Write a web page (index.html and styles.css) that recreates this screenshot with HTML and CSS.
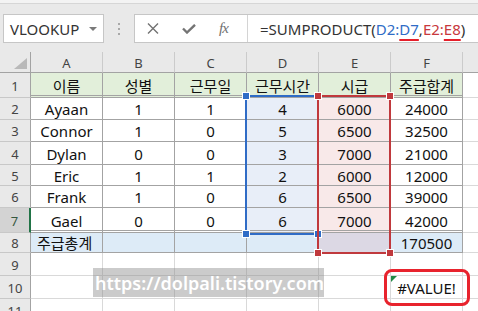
FILE: index.html
```html
<!DOCTYPE html>
<html lang="ko">
<head>
  <meta charset="UTF-8">
  <title>SUMPRODUCT #VALUE!</title>
  <link rel="stylesheet" href="styles.css">
</head>
<body>
  <div class="toolbar">
    <div class="namebox"><span>VLOOKUP</span><span class="caret"></span></div>
    <div class="grip">
      <svg width="2" height="12" viewBox="0 0 2 12"><rect y="0" width="2" height="2" fill="#a8a8a8"/><rect y="5" width="2" height="2" fill="#a8a8a8"/><rect y="10" width="2" height="2" fill="#a8a8a8"/></svg>
    </div>
    <div class="fbar">
      <div class="fbtns">
        <svg width="12" height="11" viewBox="0 0 12 11"><path d="M1 0.5 L11 10.5 M11 0.5 L1 10.5" stroke="#727272" stroke-width="1.4" fill="none"/></svg>
        <svg width="14" height="10" viewBox="0 0 14 10"><path d="M1 4.5 L5 8.5 L13 0.8" stroke="#747474" stroke-width="2.4" fill="none"/></svg>
        <span class="fx">fx</span>
      </div>
      <div class="formula">=SUMPRODUCT(<span class="ref-d">D2:<span class="mark">D7</span></span>,<span class="ref-e">E2:<span class="mark">E8</span></span>)</div>
    </div>
  </div>

  <div class="sheet">
    <div class="grid">
      <div class="hd corner"></div>
      <div class="hd">A</div><div class="hd">B</div><div class="hd">C</div><div class="hd">D</div><div class="hd">E</div><div class="hd">F</div><div class="hd"></div>

      <div class="rh">1</div>
      <div class="c t title dbl">이름</div><div class="c t title dbl">성별</div><div class="c t title dbl">근무일</div><div class="c t title dbl">근무시간</div><div class="c t title dbl">시급</div><div class="c t title dbl">주급합계</div><div class="c"></div>

      <div class="rh">2</div>
      <div class="c t">Ayaan</div><div class="c t">1</div><div class="c t">1</div><div class="c t hrs">4</div><div class="c t pay">6000</div><div class="c t">24000</div><div class="c"></div>

      <div class="rh">3</div>
      <div class="c t">Connor</div><div class="c t">1</div><div class="c t">0</div><div class="c t hrs">5</div><div class="c t pay">6500</div><div class="c t">32500</div><div class="c"></div>

      <div class="rh">4</div>
      <div class="c t">Dylan</div><div class="c t">0</div><div class="c t">0</div><div class="c t hrs">3</div><div class="c t pay">7000</div><div class="c t">21000</div><div class="c"></div>

      <div class="rh">5</div>
      <div class="c t">Eric</div><div class="c t">1</div><div class="c t">1</div><div class="c t hrs">2</div><div class="c t pay">6000</div><div class="c t">12000</div><div class="c"></div>

      <div class="rh">6</div>
      <div class="c t">Frank</div><div class="c t">1</div><div class="c t">0</div><div class="c t hrs">6</div><div class="c t pay">6500</div><div class="c t">39000</div><div class="c"></div>

      <div class="rh active">7</div>
      <div class="c t dbl">Gael</div><div class="c t dbl">0</div><div class="c t dbl">0</div><div class="c t dbl hrs">6</div><div class="c t dbl pay">7000</div><div class="c t dbl">42000</div><div class="c"></div>

      <div class="rh">8</div>
      <div class="c t total left">주급총계</div><div class="c t total"></div><div class="c t total"></div><div class="c t total"></div><div class="c t total-sel"></div><div class="c t total">170500</div><div class="c"></div>

      <div class="rh">9</div>
      <div class="c"></div><div class="c"></div><div class="c"></div><div class="c"></div><div class="c"></div><div class="c"></div><div class="c"></div>

      <div class="rh">10</div>
      <div class="c"></div><div class="c"></div><div class="c"></div><div class="c"></div><div class="c"></div><div class="c err">#VALUE!</div><div class="c"></div>

      <div class="rh">11</div>
      <div class="c"></div><div class="c"></div><div class="c"></div><div class="c"></div><div class="c"></div><div class="c"></div><div class="c"></div>
    </div>

    <div class="marks">
      <div class="sel sel-d"><i class="h tl"></i><i class="h tr"></i><i class="h bl"></i><i class="h br"></i></div>
      <div class="sel sel-e"><i class="h tl"></i><i class="h tr"></i><i class="h bl"></i><i class="h br"></i></div>
    </div>

    <div class="watermark">https://dolpali.tistory.com</div>
  </div>
</body>
</html>
```

FILE: styles.css
```css
:root {
  --chrome: #e9e9e9;
  --grid-line: #d9d9d9;
  --table-line: #a3a3a3;
  --head-line: #bdbdbd;
  --blue: #2f6cc6;
  --red: #c0393d;
  --text: #111111;
}
* { box-sizing: border-box; margin: 0; padding: 0; }
body {
  width: 478px;
  height: 311px;
  overflow: hidden;
  background: #fff;
  color: var(--text);
  font-family: "Noto Sans", "Noto Sans CJK KR", sans-serif;
}

/* formula bar */
.toolbar {
  height: 52px;
  display: flex;
  align-items: flex-start;
  padding: 14px 0 0 3px;
  background: linear-gradient(#f3f3f3 0 3px, #d6d6d6 3px 4px, var(--chrome) 4px);
}
.toolbar > * { flex-shrink: 0; }
.namebox {
  width: 101px; height: 29px;
  display: flex; align-items: center;
  padding: 0 6px 0 6px;
  background: #fff;
  border: 1px solid #c6c6c6;
  font-size: 15px; color: #333;
}
.caret {
  margin-left: auto;
  border-top: 4px solid #7a7a7a;
  border-left: 4px solid transparent;
  border-right: 4px solid transparent;
}
.grip {
  width: 30px; height: 29px;
  display: flex; align-items: center; justify-content: center;
}
.fbar {
  width: 360px; height: 29px;
  display: flex;
  background: #fff;
  border: 1px solid #c6c6c6;
}
.fbtns {
  width: 113px;
  display: flex; align-items: center; gap: 23px;
  padding-left: 12px;
  border-right: 1px solid #d4d4d4;
}
.fx {
  font-family: "Liberation Serif", serif;
  font-style: italic;
  font-size: 15px;
  color: #707070;
  letter-spacing: -1px;
}
.formula {
  display: flex; align-items: center;
  padding-left: 12px;
  font-size: 15px;
  color: #333;
  white-space: pre;
}
.ref-d { color: #2f6cc6; }
.ref-e { color: #c8383d; }
.mark {
  text-decoration: underline 2px #e51f2a;
  text-underline-offset: 4px;
}

/* sheet */
.sheet {
  position: relative;
  height: 259px;
  overflow: hidden;
}
.grid, .marks {
  display: grid;
  grid-template-columns: 31px repeat(7, 72px);
  grid-template-rows: 21px 25px 22px 22px 23px 21px 22px 25px 20px 23px 23px 23px;
}
.marks {
  position: absolute;
  inset: 0;
  pointer-events: none;
}
.hd, .rh {
  display: flex; align-items: center; justify-content: center;
  background: var(--chrome);
  font-size: 13px;
  color: #444;
  border-right: 1px solid var(--head-line);
  border-bottom: 1px solid var(--table-line);
}
.hd { border-right-color: #cbcbcb; padding-top: 1px; }
.rh { border-right-color: var(--table-line); border-bottom-color: #c8c8c8; padding-top: 1px; }
.rh.active {
  background: #d3d3d3;
  color: #35573f;
  border-right: 2px solid #217346;
}
.corner { position: relative; border-right-color: var(--table-line); }
.corner::after {
  content: '';
  position: absolute;
  right: 3px; bottom: 3px;
  width: 13px; height: 11px;
  background: #b9b9b9;
  clip-path: polygon(100% 0, 100% 100%, 0 100%);
}

.c {
  display: flex; align-items: center; justify-content: center;
  padding-top: 2px;
  font-size: 15px;
  line-height: 1;
  border-right: 1px solid var(--grid-line);
  border-bottom: 1px solid var(--grid-line);
}
.c.t { border-color: var(--table-line); }
.c.dbl { border-bottom: 3px double var(--table-line); padding-top: 4px; }
.title { background: #e2efda; }
.hrs { background: #e8eef8; }
.pay { background: #f8e9e9; }
.total { background: #ddebf7; }
.total-sel { background: #dcd8e4; }
.left { justify-content: flex-start; padding-left: 6px; }

.err {
  position: relative;
  z-index: 2;
  outline: 3px solid #e8232d;
  outline-offset: 4px;
  border-radius: 1px;
}
.err::before {
  content: '';
  position: absolute;
  left: 0; top: 0;
  border-top: 6px solid #1f8a45;
  border-right: 6px solid transparent;
}

/* range highlights */
.sel { position: relative; border: 2px solid; }
.sel-d {
  grid-column: 5; grid-row: 3 / 9;
  margin: -3px 0 -2px -2px;
  border-color: var(--blue);
  color: var(--blue);
}
.sel-e {
  grid-column: 6; grid-row: 3 / 10;
  margin: -3px 0 -1px -2px;
  border-color: var(--red);
  color: var(--red);
}
.h {
  position: absolute;
  width: 6px; height: 6px;
  background: currentColor;
  box-shadow: 0 0 0 1px #fff;
}
.h.tl { left: -4px; top: -4px; }
.h.tr { right: -4px; top: -4px; }
.h.bl { left: -4px; bottom: -4px; }
.h.br { right: -4px; bottom: -4px; }

.watermark {
  position: absolute;
  left: 93px; top: 216px;
  width: 231px; height: 29px;
  display: flex; align-items: center;
  padding-left: 2px;
  background: rgba(140,140,140,0.45);
  color: #fff;
  font-size: 18px;
  font-weight: 600;
  white-space: nowrap;
}
```
